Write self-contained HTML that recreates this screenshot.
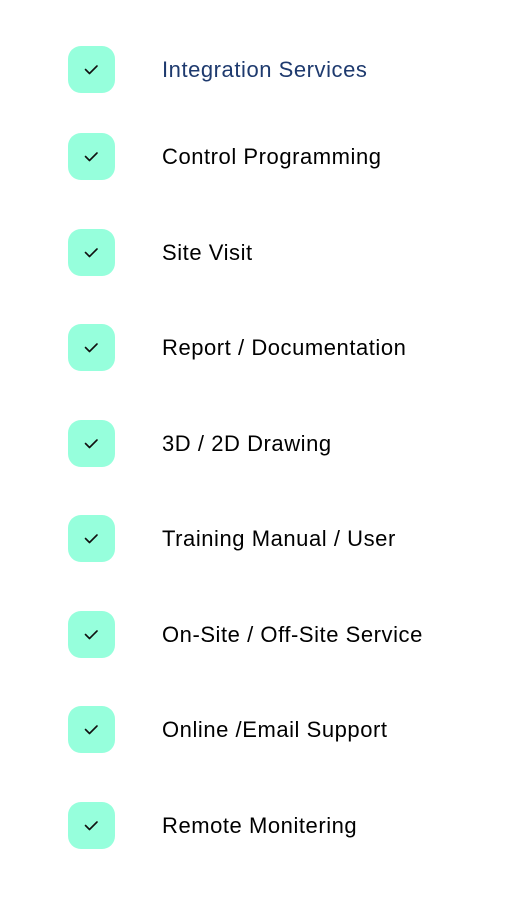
<!DOCTYPE html>
<html><head><style>
body{margin:0;width:516px;height:903px;background:#fff;position:relative;font-family:"Liberation Sans",sans-serif;}
.row{position:absolute;left:0;width:516px;height:48px;}
.box{position:absolute;left:68px;top:0;width:47px;height:47px;border-radius:13px;background:#96ffdc;}
.box svg{position:absolute;left:15px;top:15px;}
.t{position:absolute;left:162px;top:12px;font-size:22px;line-height:24px;color:#000;letter-spacing:0.55px;white-space:nowrap;}
</style></head><body>
<div class="row" style="top:46px"><div class="box"><svg width="17" height="17" viewBox="0 0 17 17"><path d="M2.5 8.5 L6.5 12.5 L14 5" stroke="#111" stroke-width="1.6" fill="none" stroke-linecap="round" stroke-linejoin="round"/></svg></div><div class="t" style="color:#1e3a6e">Integration Services</div></div>
<div class="row" style="top:133px"><div class="box"><svg width="17" height="17" viewBox="0 0 17 17"><path d="M2.5 8.5 L6.5 12.5 L14 5" stroke="#111" stroke-width="1.6" fill="none" stroke-linecap="round" stroke-linejoin="round"/></svg></div><div class="t">Control Programming</div></div>
<div class="row" style="top:229px"><div class="box"><svg width="17" height="17" viewBox="0 0 17 17"><path d="M2.5 8.5 L6.5 12.5 L14 5" stroke="#111" stroke-width="1.6" fill="none" stroke-linecap="round" stroke-linejoin="round"/></svg></div><div class="t">Site Visit</div></div>
<div class="row" style="top:324px"><div class="box"><svg width="17" height="17" viewBox="0 0 17 17"><path d="M2.5 8.5 L6.5 12.5 L14 5" stroke="#111" stroke-width="1.6" fill="none" stroke-linecap="round" stroke-linejoin="round"/></svg></div><div class="t">Report / Documentation</div></div>
<div class="row" style="top:420px"><div class="box"><svg width="17" height="17" viewBox="0 0 17 17"><path d="M2.5 8.5 L6.5 12.5 L14 5" stroke="#111" stroke-width="1.6" fill="none" stroke-linecap="round" stroke-linejoin="round"/></svg></div><div class="t">3D / 2D Drawing</div></div>
<div class="row" style="top:515px"><div class="box"><svg width="17" height="17" viewBox="0 0 17 17"><path d="M2.5 8.5 L6.5 12.5 L14 5" stroke="#111" stroke-width="1.6" fill="none" stroke-linecap="round" stroke-linejoin="round"/></svg></div><div class="t">Training Manual / User</div></div>
<div class="row" style="top:611px"><div class="box"><svg width="17" height="17" viewBox="0 0 17 17"><path d="M2.5 8.5 L6.5 12.5 L14 5" stroke="#111" stroke-width="1.6" fill="none" stroke-linecap="round" stroke-linejoin="round"/></svg></div><div class="t">On-Site / Off-Site Service</div></div>
<div class="row" style="top:706px"><div class="box"><svg width="17" height="17" viewBox="0 0 17 17"><path d="M2.5 8.5 L6.5 12.5 L14 5" stroke="#111" stroke-width="1.6" fill="none" stroke-linecap="round" stroke-linejoin="round"/></svg></div><div class="t">Online /Email Support</div></div>
<div class="row" style="top:802px"><div class="box"><svg width="17" height="17" viewBox="0 0 17 17"><path d="M2.5 8.5 L6.5 12.5 L14 5" stroke="#111" stroke-width="1.6" fill="none" stroke-linecap="round" stroke-linejoin="round"/></svg></div><div class="t">Remote Monitering</div></div>
</body></html>
